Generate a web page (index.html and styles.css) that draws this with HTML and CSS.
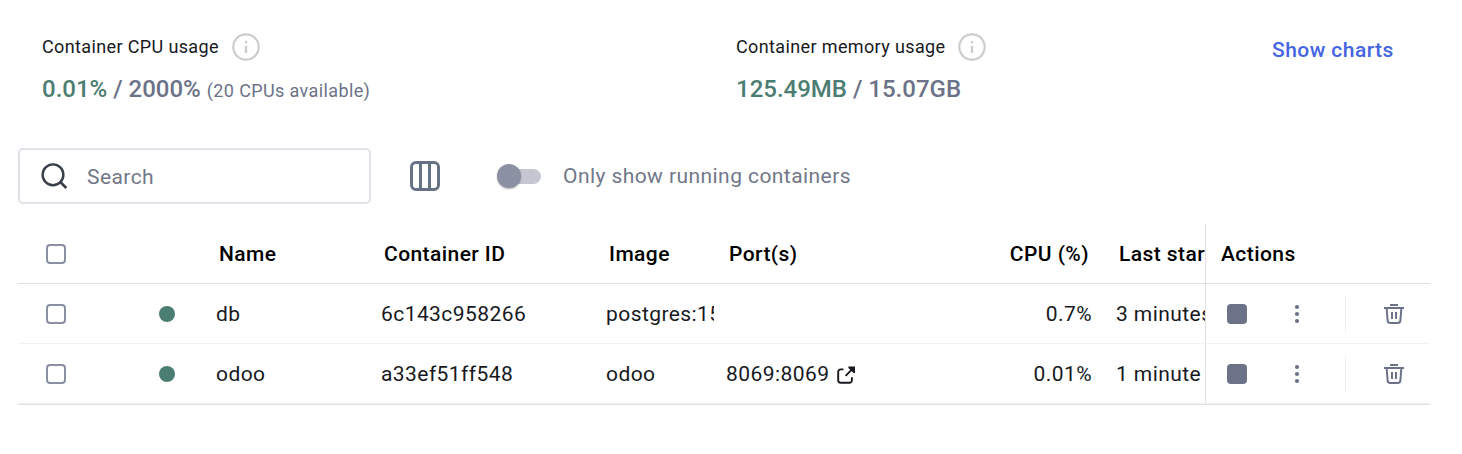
FILE: index.html
```html
<!DOCTYPE html>
<html lang="en">
<head>
<meta charset="utf-8">
<title>Containers</title>
<link rel="stylesheet" href="styles.css">
</head>
<body>
<svg class="sprite" aria-hidden="true">
  <symbol id="info" viewBox="0 0 28 28"><circle cx="14" cy="14" r="12.700" fill="none" stroke="currentColor" stroke-width="2.200"/><path d="M14 13v7M14 8v2.200" fill="none" stroke="currentColor" stroke-width="2.400"/></symbol>
  <symbol id="external" viewBox="0 0 20 20"><path d="M7.500 5.400H4.700A2.500 2.500 0 0 0 2.200 7.900v8.400A2.500 2.500 0 0 0 4.700 18.800h8.700A2.500 2.500 0 0 0 15.900 16.300v-3M9.600 11.800 16.500 4.900" fill="none" stroke="currentColor" stroke-width="1.900"/><path d="M12.400 2.400h6.600v6.600h-1.500L12.400 3.900z" fill="currentColor"/></symbol>
  <symbol id="trash" viewBox="0 0 20 20"><path d="M6 1h8M0 4h20M2.600 4l1 12.200A2.800 2.800 0 0 0 6.400 19h7.200A2.800 2.800 0 0 0 16.400 16.200L17.400 4M8 8v7M12 8v7" fill="none" stroke="currentColor" stroke-width="2"/></symbol>
  <symbol id="more" viewBox="0 0 6 20"><g fill="currentColor"><circle cx="3" cy="3" r="2.100"/><circle cx="3" cy="10" r="2.100"/><circle cx="3" cy="17" r="2.100"/></g></symbol>
</svg>
<main class="page">
  <section class="stats">
    <div class="stat stat-cpu">
      <div class="stat-title"><span>Container CPU usage</span><svg class="info"><use href="#info"/></svg></div>
      <div class="stat-value"><span class="used">0.01%</span> / 2000% <span class="note">(20 CPUs available)</span></div>
    </div>
    <div class="stat stat-memory">
      <div class="stat-title"><span>Container memory usage</span><svg class="info"><use href="#info"/></svg></div>
      <div class="stat-value"><span class="used">125.49MB</span> / 15.07GB</div>
    </div>
    <a class="charts">Show charts</a>
  </section>
  <section class="toolbar">
    <div class="search">
      <svg class="search-icon" viewBox="0 0 28 28"><circle cx="12" cy="12.800" r="10.400" fill="none" stroke="currentColor" stroke-width="2.400"/><path d="m19.300 20 6 6" stroke="currentColor" stroke-width="2.600"/></svg>
      <span class="placeholder">Search</span>
    </div>
    <svg class="columns-icon" viewBox="0 0 30 30"><rect x="1.500" y="1.500" width="27" height="27" rx="4.500" fill="none" stroke="currentColor" stroke-width="3"/><path d="M10.500 1v28M19.500 1v28" stroke="currentColor" stroke-width="3"/></svg>
    <div class="switch"><div class="knob"></div></div>
    <span class="switch-label">Only show running containers</span>
  </section>
  <section class="table">
    <div class="row head">
      <div class="cell check"><span class="box"></span></div><div class="cell status"></div>
      <div class="cell">Name</div><div class="cell">Container ID</div><div class="cell">Image</div><div class="cell">Port(s)</div><div class="cell number">CPU (%)</div><div class="cell">Last started</div>
      <div class="cell actions">Actions</div>
    </div>
    <div class="row">
      <div class="cell check"><span class="box"></span></div><div class="cell status"><span class="dot"></span></div>
      <div class="cell">db</div><div class="cell">6c143c958266</div><div class="cell">postgres:15</div><div class="cell"></div><div class="cell number">0.7%</div><div class="cell">3 minutes ago</div>
      <div class="cell actions"><span class="stop"></span><svg class="more"><use href="#more"/></svg><span class="divider"></span><svg class="trash"><use href="#trash"/></svg></div>
    </div>
    <div class="row">
      <div class="cell check"><span class="box"></span></div><div class="cell status"><span class="dot"></span></div>
      <div class="cell">odoo</div><div class="cell">a33ef51ff548</div><div class="cell">odoo</div><div class="cell port">8069:8069<svg class="external"><use href="#external"/></svg></div><div class="cell number">0.01%</div><div class="cell">1 minute ago</div>
      <div class="cell actions"><span class="stop"></span><svg class="more"><use href="#more"/></svg><span class="divider"></span><svg class="trash"><use href="#trash"/></svg></div>
    </div>
  </section>
</main>
</body>
</html>
```
FILE: styles.css
```css
* { box-sizing: border-box; }
body { margin: 0; background: #fff; font-family: Roboto, sans-serif; color: #17191e; }
svg { display: block; flex: none; }
.sprite { display: none; }
.page { width: 1462px; height: 454px; padding: 32px 32px 0 18px; overflow: hidden; }

.stats { display: flex; height: 116px; padding-left: 24px; }
.stat-cpu { width: 694px; }
.stat-memory { width: 536px; }
.stat-title { display: flex; align-items: center; gap: 13px; height: 30px; font-size: 18px; letter-spacing: .37px; }
.stat-title span { padding-bottom: 2px; }
.info { width: 28px; height: 28px; color: #ccc; }
.stat-value { margin-top: 10px; font-size: 24px; line-height: 34px; font-weight: 500; color: #6c7288; white-space: nowrap; }
.used { color: #4c7d73; }
.note { font-size: 18px; font-weight: 400; letter-spacing: .38px; }
.charts { padding-top: 3px; font-size: 21px; line-height: 30px; font-weight: 500; letter-spacing: .45px; color: #4665e2; white-space: nowrap; }

.toolbar { display: flex; align-items: center; height: 56px; color: #717789; font-size: 21px; letter-spacing: .43px; }
.search { display: flex; align-items: center; gap: 18px; width: 353px; height: 56px; padding-left: 21px; border: 2px solid #e1e2e9; border-radius: 5px; }
.search-icon { width: 28px; height: 28px; color: #393f49; }
.placeholder { padding-top: 2px; }
.columns-icon { width: 30px; height: 30px; margin-left: 39px; color: #677285; }
.switch { display: flex; align-items: center; width: 42px; height: 15px; margin-left: 59px; border-radius: 8px; background: #c4c7d1; }
.knob { width: 24px; height: 24px; margin-left: -2px; border-radius: 50%; background: #8b91a3; box-shadow: 0 1px 2px rgba(0,0,0,.3); }
.switch-label { margin-left: 22px; }

.table { width: 1412px; margin-top: 20px; border-bottom: 1px solid #e0e0e0; }
.row { display: grid; grid-template-columns: 126px 60px 165px 225px 120px 240px 150px 101px 225px; height: 60px; border-bottom: 1px solid #f1f1f1; font-size: 21px; letter-spacing: .43px; }
.head { border-bottom-color: #e0e0e0; font-weight: 500; color: #000; }
.cell { display: flex; align-items: center; padding: 0 12px; overflow: hidden; white-space: nowrap; }
.head .cell { padding: 0 15px; }
.row .check { padding-left: 28px; }
.box { width: 20px; height: 20px; border: 2px solid #8b91a3; border-radius: 4px; }
.row .status { padding-left: 15px; }
.dot { width: 16px; height: 16px; border-radius: 50%; background: #4c7d73; }
.number { justify-content: flex-end; }
.port { gap: 7px; }
.external { width: 20px; height: 20px; }
.row .actions { padding: 0 0 0 15px; border-left: 1px solid #e0e0e0; }
.row:not(.head) .actions { padding-left: 21px; color: #6c7288; }
.stop { width: 20px; height: 20px; border-radius: 4px; background: #6c7288; }
.more { width: 6px; height: 20px; margin-left: 47px; }
.divider { width: 1px; height: 36px; margin-left: 45px; background: #eee; }
.trash { width: 20px; height: 20px; margin-left: 38px; }
```
